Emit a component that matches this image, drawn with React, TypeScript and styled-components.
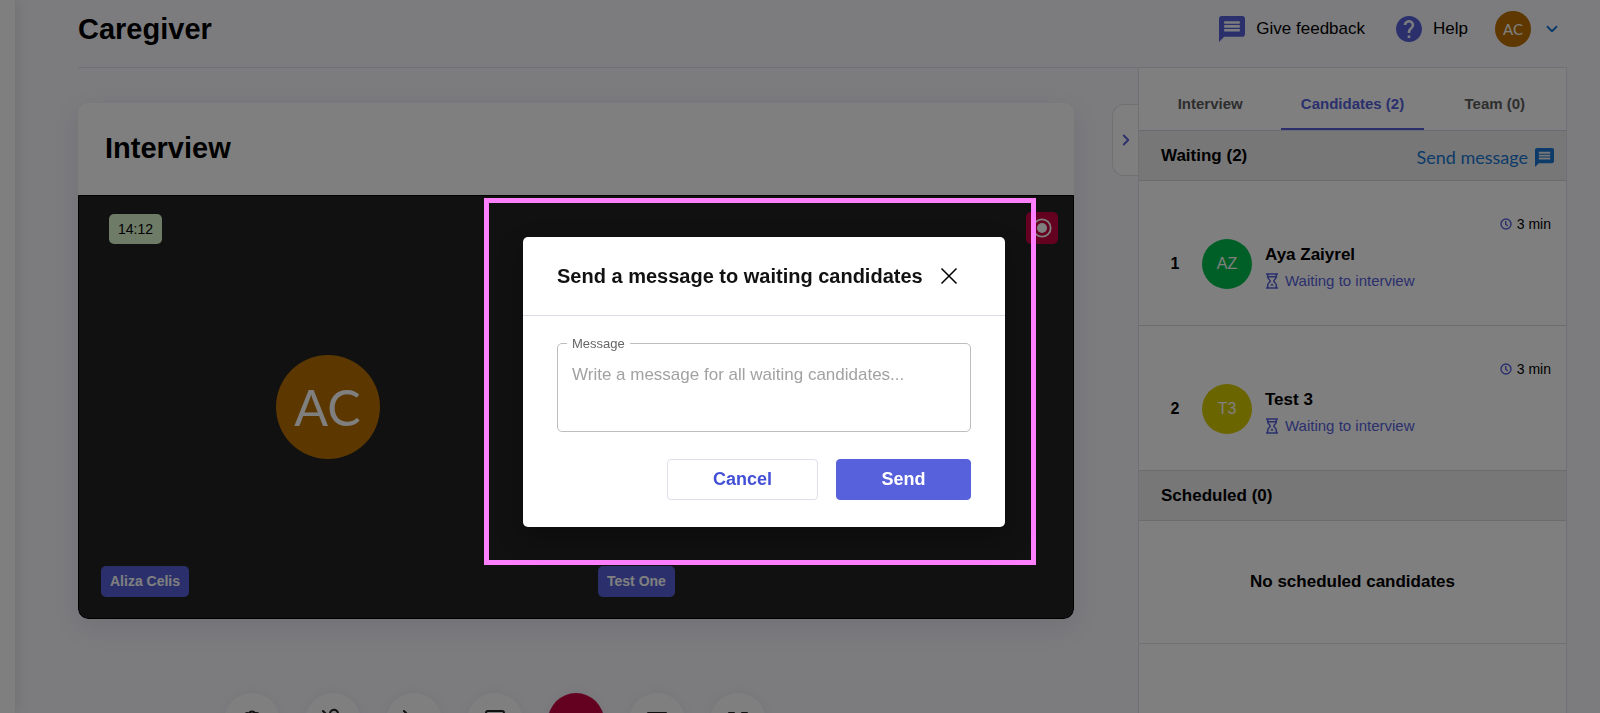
import React from "react";
import styled, { createGlobalStyle } from "styled-components";
import { ChevronDown, ChevronRight, VideoOff } from "lucide-react";

const indigo = "#5661db";
const line = "#e0e0ea";

const GlobalStyle = createGlobalStyle`
  *, *::before, *::after { box-sizing: border-box; }
  body { margin: 0; overflow: hidden; font-family: "Liberation Sans", Arial, sans-serif; color: #000; background: #f8f8fe; }
  button { font-family: inherit; cursor: pointer; }
  h1, h2, h3, p, ol { margin: 0; padding: 0; }
  svg { display: block; flex: none; }
`;

const Shell = styled.div`
  display: flex;
  height: 100vh;
  overflow: hidden;
`;

const SideRail = styled.aside`
  flex: 0 0 15px;
  background: #fff;
  box-shadow: 0 0 16px rgba(0, 0, 0, 0.12);
`;

const Page = styled.div`
  flex: 1;
  min-width: 0;
  display: flex;
  flex-direction: column;
  padding: 0 33px 0 63px;
`;

const TopBar = styled.header`
  flex: none;
  height: 68px;
  display: flex;
  align-items: center;
  justify-content: space-between;
  padding-bottom: 10px;
  border-bottom: 1px solid ${line};
`;

const Heading = styled.h1`
  font-size: 29px;
  line-height: 34px;
  font-weight: 700;
`;

const TopActions = styled.nav`
  display: flex;
  align-items: center;
  padding-right: 6px;
`;

const TopLink = styled.a`
  display: flex;
  align-items: center;
  gap: 11px;
  margin-right: 31px;
  font-size: 17px;
  color: #000;
  text-decoration: none;
  svg { color: ${indigo}; }
  &:last-of-type { margin-right: 27px; }
`;

const AccountButton = styled.button`
  display: flex;
  align-items: center;
  gap: 12px;
  padding: 0;
  border: 0;
  background: none;
  color: #1976d2;
`;

const Avatar = styled.span<{ $size: number; $font: number; $color: string; $lato?: boolean }>`
  flex: none;
  display: flex;
  align-items: center;
  justify-content: center;
  width: ${(p) => p.$size}px;
  height: ${(p) => p.$size}px;
  border-radius: 50%;
  background: ${(p) => p.$color};
  color: #fff;
  font-size: ${(p) => p.$font}px;
  font-family: ${(p) => (p.$lato ? "Lato, sans-serif" : "inherit")};
`;

const Body = styled.div`
  flex: 1;
  min-height: 0;
  display: flex;
`;

const Stage = styled.main`
  flex: 1;
  min-width: 0;
  padding-top: 35px;
  margin-right: 38px;
`;

const Card = styled.section`
  border-radius: 10px;
  background: #fff;
  box-shadow: 0 8px 28px rgba(20, 20, 60, 0.09);
  overflow: hidden;
`;

const CardHeader = styled.div`
  height: 92px;
  display: flex;
  align-items: center;
  padding: 0 27px 2px;
`;

const CardTitle = styled(Heading).attrs({ as: "h2" })``;

const Video = styled.div`
  position: relative;
  display: grid;
  grid-template-columns: 1fr 1fr;
  min-height: 424px;
  background: #222;
  border: 1px solid #000;
  border-radius: 0 0 10px 10px;
`;

const Tile = styled.div`
  position: relative;
  display: flex;
  align-items: center;
  justify-content: center;
`;

const NameTag = styled.span`
  position: absolute;
  left: 22px;
  bottom: 21px;
  padding: 0 9px;
  border-radius: 5px;
  background: ${indigo};
  color: #fff;
  font-size: 14px;
  line-height: 31px;
  font-weight: 700;
`;

const Timer = styled.time`
  position: absolute;
  left: 30px;
  top: 18px;
  padding: 0 9px;
  border-radius: 5px;
  background: #dcf6cf;
  font-size: 14px;
  line-height: 30px;
`;

const Recording = styled.span`
  position: absolute;
  right: 15px;
  top: 16px;
  display: flex;
  align-items: center;
  justify-content: center;
  width: 32px;
  height: 32px;
  border-radius: 5px;
  background: #c80041;
  color: #fff;
`;

const CallBar = styled.div`
  display: grid;
  grid-template-columns: 1fr auto 1fr;
  gap: 25px;
  margin-top: 74px;
`;

const CallGroup = styled.div<{ $end?: boolean }>`
  display: flex;
  gap: 25px;
  justify-content: ${(p) => (p.$end ? "flex-end" : "flex-start")};
`;

const RoundButton = styled.button<{ $danger?: boolean }>`
  display: flex;
  align-items: center;
  justify-content: center;
  flex: none;
  width: 56px;
  height: 56px;
  padding: 0;
  border: 0;
  border-radius: 50%;
  background: ${(p) => (p.$danger ? "#c80041" : "#fff")};
  color: ${(p) => (p.$danger ? "#fff" : "#222")};
  box-shadow: 0 0 12px rgba(0, 0, 60, 0.05);
`;

const PanelToggle = styled.button`
  flex: none;
  display: flex;
  align-items: center;
  justify-content: center;
  width: 26px;
  height: 72px;
  margin-top: 36px;
  padding: 0;
  border: 1px solid ${line};
  border-right: 0;
  border-radius: 12px 0 0 12px;
  background: #fff;
  color: ${indigo};
`;

const Panel = styled.aside`
  flex: 0 0 429px;
  background: #fff;
  border: solid ${line};
  border-width: 0 1px;
`;

const Tabs = styled.div`
  display: grid;
  grid-template-columns: repeat(3, 1fr);
  height: 63px;
  padding-top: 10px;
  border-bottom: 1px solid #d4d4ee;
`;

const Tab = styled.button<{ $active?: boolean }>`
  border: 0;
  border-bottom: 2px solid ${(p) => (p.$active ? indigo : "transparent")};
  padding: 0;
  background: none;
  color: ${(p) => (p.$active ? indigo : "#5c5c5c")};
  font-size: 15px;
  font-weight: 700;
`;

const SectionBar = styled.div`
  display: flex;
  align-items: center;
  justify-content: space-between;
  height: 50px;
  padding: 0 12px 0 22px;
  background: #efefef;
  border-bottom: 1px solid #d8d8d8;
`;

const SectionTitle = styled.h3`
  font-size: 17px;
  line-height: 20px;
  font-weight: 700;
`;

const MessageLink = styled.button`
  display: flex;
  align-items: center;
  gap: 7px;
  padding: 3px 0 0;
  border: 0;
  background: none;
  color: #1976d2;
  font: 18px/22px Lato, sans-serif;
`;

const People = styled.ol`
  list-style: none;
`;

const Person = styled.li`
  height: 145px;
  padding: 35px 15px 0 28px;
  border-bottom: 1px solid #d8d8d8;
`;

const Wait = styled.div`
  display: flex;
  align-items: center;
  justify-content: flex-end;
  gap: 5px;
  font-size: 14px;
  line-height: 16px;
  svg { color: ${indigo}; }
`;

const PersonRow = styled.div`
  display: flex;
  align-items: center;
  margin-top: 5px;
`;

const Position = styled.span`
  width: 16px;
  margin-right: 19px;
  text-align: center;
  font-size: 16px;
  font-weight: 700;
`;

const PersonText = styled.div`
  margin-left: 13px;
  padding-top: 8px;
`;

const Status = styled.p`
  display: flex;
  align-items: center;
  gap: 6px;
  margin-top: 6px;
  color: ${indigo};
  font-size: 15px;
  line-height: 20px;
`;

const Empty = styled.p`
  height: 123px;
  display: flex;
  align-items: center;
  justify-content: center;
  border-bottom: 1px solid ${line};
  font-size: 17px;
  font-weight: 700;
`;

const Overlay = styled.div`
  position: fixed;
  inset: 0;
  display: flex;
  align-items: center;
  justify-content: center;
  padding: 50px 80px 0 0;
  background: rgba(0, 0, 0, 0.5);
`;

const Highlight = styled.div`
  padding: 34px 26px 33px 34px;
  border: 5px solid #ff80ff;
`;

const Dialog = styled.div`
  width: 482px;
  border-radius: 5px;
  background: #fff;
  box-shadow: 0 11px 30px rgba(0, 0, 0, 0.3);
`;

const DialogHead = styled.div`
  display: flex;
  align-items: center;
  gap: 16px;
  height: 79px;
  padding: 0 34px;
  border-bottom: 1px solid #dcdce6;
`;

const DialogTitle = styled.h2`
  font-size: 20px;
  line-height: 24px;
  font-weight: 700;
  color: #111;
  white-space: nowrap;
`;

const CloseButton = styled.button`
  padding: 0;
  border: 0;
  background: none;
  color: #000;
`;

const DialogForm = styled.form`
  padding: 20px 34px 27px;
`;

const Field = styled.fieldset`
  height: 96px;
  margin: 0;
  padding: 0 14px;
  border: 1px solid #bdbdbd;
  border-radius: 5px;
`;

const Legend = styled.legend`
  margin-left: -5px;
  padding: 0 5px;
  font-size: 13px;
  line-height: 15px;
  color: #666;
`;

const TextArea = styled.textarea`
  display: block;
  width: 100%;
  height: 60px;
  margin-top: 14px;
  padding: 0;
  border: 0;
  outline: 0;
  resize: none;
  font: 17px/20px "Liberation Sans", Arial, sans-serif;
  &::placeholder { color: #a2a2a2; opacity: 1; }
`;

const Actions = styled.div`
  display: flex;
  justify-content: flex-end;
  gap: 18px;
  margin-top: 27px;
`;

const ActionButton = styled.button<{ $primary?: boolean }>`
  width: ${(p) => (p.$primary ? 135 : 151)}px;
  height: 41px;
  padding: 0;
  border: 1px solid ${(p) => (p.$primary ? indigo : "#dedeed")};
  border-radius: 4px;
  background: ${(p) => (p.$primary ? indigo : "#fff")};
  color: ${(p) => (p.$primary ? "#fff" : "#4350d6")};
  font-size: 18px;
  font-weight: 700;
`;

const MessageIcon = ({ size }: { size: number }) => (
  <svg width={size} height={size} viewBox="2 2 20 20" fill="currentColor" aria-hidden="true">
    <path d="M20 2H4c-1.1 0-1.99.9-1.99 2L2 22l4-4h14c1.1 0 2-.9 2-2V4c0-1.1-.9-2-2-2zm-2 12H6v-2h12v2zm0-3H6V9h12v2zm0-3H6V6h12v2z" />
  </svg>
);

const HelpIcon = () => (
  <svg width="26" height="26" viewBox="2 2 20 20" fill="currentColor" aria-hidden="true">
    <path d="M12 2C6.48 2 2 6.48 2 12s4.48 10 10 10 10-4.48 10-10S17.52 2 12 2zm1 17h-2v-2h2v2zm2.07-7.75l-.9.92C13.45 12.9 13 13.5 13 15h-2v-.5c0-1.1.45-2.1 1.17-2.83l1.24-1.26c.37-.36.59-.86.59-1.41 0-1.1-.9-2-2-2s-2 .9-2 2H8c0-2.21 1.79-4 4-4s4 1.79 4 4c0 .88-.36 1.68-.93 2.25z" />
  </svg>
);

const EndCallIcon = () => (
  <svg width="28" height="28" viewBox="0 0 24 24" fill="currentColor" aria-hidden="true">
    <path d="M12 9c-1.600 0-3.150.250-4.600.720v3.100c0 .390-.230.740-.560.900-.980.490-1.870 1.120-2.660 1.850-.180.180-.430.280-.700.280-.280 0-.530-.110-.710-.290L.290 13.080A1 1 0 0 1 0 12.370c0-.280.110-.530.290-.710C3.340 8.780 7.460 7 12 7s8.660 1.780 11.710 4.670c.180.180.290.430.290.710s-.110.530-.290.710l-2.480 2.480c-.180.180-.430.290-.710.290-.270 0-.520-.110-.700-.280a11 11 0 0 0-2.670-1.850 1 1 0 0 1-.560-.900v-3.100A15 15 0 0 0 12 9z" />
  </svg>
);

const ClockIcon = () => (
  <svg width="12" height="12" viewBox="0 0 12 12" fill="none" stroke="currentColor" strokeWidth="1.4" aria-hidden="true">
    <circle cx="6" cy="6" r="5" />
    <path d="M5.700 3v3.200l2 1.900" />
  </svg>
);

const HourglassIcon = () => (
  <svg width="14" height="16" viewBox="0 0 14 16" fill="none" stroke="currentColor" strokeWidth="1.6" aria-hidden="true">
    <path d="M1 1h12M1 15h12M2.700 1v2.800C2.700 6 5.200 6.700 5.200 8S2.700 10 2.700 12.200V15M11.300 1v2.800C11.300 6 8.800 6.700 8.800 8s2.500 2 2.500 4.200V15M3 3.800h8" />
    <path d="M7 10.300l1.800 2.200H5.200z" fill="currentColor" stroke="none" />
  </svg>
);

const RecordIcon = () => (
  <svg width="20" height="20" viewBox="0 0 20 20" aria-hidden="true">
    <circle cx="10" cy="10" r="8.700" fill="none" stroke="currentColor" strokeWidth="1.800" />
    <circle cx="10" cy="10" r="5" fill="currentColor" />
  </svg>
);

const CloseIcon = () => (
  <svg width="20" height="20" viewBox="0 0 20 20" stroke="currentColor" strokeWidth="1.500" aria-hidden="true">
    <path d="M2.500 2.500l15 15M17.500 2.500l-15 15" />
  </svg>
);

const OutlineIcon = ({ d }: { d: string }) => (
  <svg width="24" height="24" viewBox="0 0 24 24" fill="none" stroke="currentColor" strokeWidth="2" strokeLinecap="round" strokeLinejoin="round" overflow="visible" aria-hidden="true">
    <path d={d} />
  </svg>
);

const candidates = [
  { name: "Aya Zaiyrel", initials: "AZ", color: "#00bf4d" },
  { name: "Test 3", initials: "T3", color: "#d6ca00" },
];

export default function App() {
  return (
    <>
      <GlobalStyle />
      <Shell>
        <SideRail />
        <Page>
          <TopBar>
            <Heading>Caregiver</Heading>
            <TopActions>
              <TopLink href="#feedback">
                <MessageIcon size={26} />
                Give feedback
              </TopLink>
              <TopLink href="#help">
                <HelpIcon />
                Help
              </TopLink>
              <AccountButton type="button" aria-label="Account menu">
                <Avatar $size={36} $font={15} $color="#bc7000" $lato>AC</Avatar>
                <ChevronDown size={18} strokeWidth={2.5} />
              </AccountButton>
            </TopActions>
          </TopBar>
          <Body>
            <Stage>
              <Card>
                <CardHeader>
                  <CardTitle>Interview</CardTitle>
                </CardHeader>
                <Video>
                  <Tile>
                    <Avatar $size={104} $font={50} $color="#b87000" $lato>AC</Avatar>
                    <NameTag>Aliza Celis</NameTag>
                  </Tile>
                  <Tile>
                    <NameTag>Test One</NameTag>
                  </Tile>
                  <Timer>14:12</Timer>
                  <Recording>
                    <RecordIcon />
                  </Recording>
                </Video>
              </Card>
              <CallBar>
                <CallGroup $end>
                  <RoundButton aria-label="Settings">
                    <OutlineIcon d="M9 4.600a3.200 3.200 0 0 1 6 0a3.200 3.200 0 0 1 4.400 4.400a3.200 3.200 0 0 1 0 6a3.200 3.200 0 0 1-4.400 4.400a3.200 3.200 0 0 1-6 0a3.200 3.200 0 0 1-4.400-4.400a3.200 3.200 0 0 1 0-6a3.200 3.200 0 0 1 4.400-4.400zM15 12a3 3 0 1 1-6 0a3 3 0 0 1 6 0" />
                  </RoundButton>
                  <RoundButton aria-label="Unmute">
                    <OutlineIcon d="M2 2l20 20M9 5a4 4 0 0 1 8-.500V11M9 9v3a4 4 0 0 0 6 3M5 11a7 7 0 0 0 12 5M12 19v3" />
                  </RoundButton>
                  <RoundButton aria-label="Start video"><VideoOff size={24} /></RoundButton>
                  <RoundButton aria-label="Share screen">
                    <OutlineIcon d="M5 2h14a2 2 0 0 1 2 2v16a2 2 0 0 1-2 2H5a2 2 0 0 1-2-2V4a2 2 0 0 1 2-2zM12 16V8M8 12l4-4 4 4" />
                  </RoundButton>
                </CallGroup>
                <RoundButton $danger aria-label="End call"><EndCallIcon /></RoundButton>
                <CallGroup>
                  <RoundButton aria-label="Chat">
                    <OutlineIcon d="M3 4h18v13H8l-5 4z" />
                  </RoundButton>
                  <RoundButton aria-label="Full screen">
                    <OutlineIcon d="M8 4H3v5M16 4h5v5M8 20H3v-5M16 20h5v-5" />
                  </RoundButton>
                </CallGroup>
              </CallBar>
            </Stage>
            <PanelToggle aria-label="Collapse panel">
              <ChevronRight size={18} strokeWidth={2.5} />
            </PanelToggle>
            <Panel>
              <Tabs role="tablist">
                <Tab role="tab">Interview</Tab>
                <Tab role="tab" $active aria-selected="true">Candidates (2)</Tab>
                <Tab role="tab">Team (0)</Tab>
              </Tabs>
              <SectionBar>
                <SectionTitle>Waiting (2)</SectionTitle>
                <MessageLink type="button">
                  Send message
                  <MessageIcon size={19} />
                </MessageLink>
              </SectionBar>
              <People>
                {candidates.map((c, i) => (
                  <Person key={c.name}>
                    <Wait>
                      <ClockIcon />
                      3 min
                    </Wait>
                    <PersonRow>
                      <Position>{i + 1}</Position>
                      <Avatar $size={50} $font={16} $color={c.color}>{c.initials}</Avatar>
                      <PersonText>
                        <SectionTitle>{c.name}</SectionTitle>
                        <Status>
                          <HourglassIcon />
                          Waiting to interview
                        </Status>
                      </PersonText>
                    </PersonRow>
                  </Person>
                ))}
              </People>
              <SectionBar>
                <SectionTitle>Scheduled (0)</SectionTitle>
              </SectionBar>
              <Empty>No scheduled candidates</Empty>
            </Panel>
          </Body>
        </Page>
      </Shell>
      <Overlay>
        <Highlight>
          <Dialog role="dialog" aria-modal="true" aria-labelledby="dialog-title">
            <DialogHead>
              <DialogTitle id="dialog-title">Send a message to waiting candidates</DialogTitle>
              <CloseButton type="button" aria-label="Close">
                <CloseIcon />
              </CloseButton>
            </DialogHead>
            <DialogForm onSubmit={(e) => e.preventDefault()}>
              <Field>
                <Legend>
                  <label htmlFor="message">Message</label>
                </Legend>
                <TextArea id="message" placeholder="Write a message for all waiting candidates..." />
              </Field>
              <Actions>
                <ActionButton type="button">Cancel</ActionButton>
                <ActionButton type="submit" $primary>Send</ActionButton>
              </Actions>
            </DialogForm>
          </Dialog>
        </Highlight>
      </Overlay>
    </>
  );
}
